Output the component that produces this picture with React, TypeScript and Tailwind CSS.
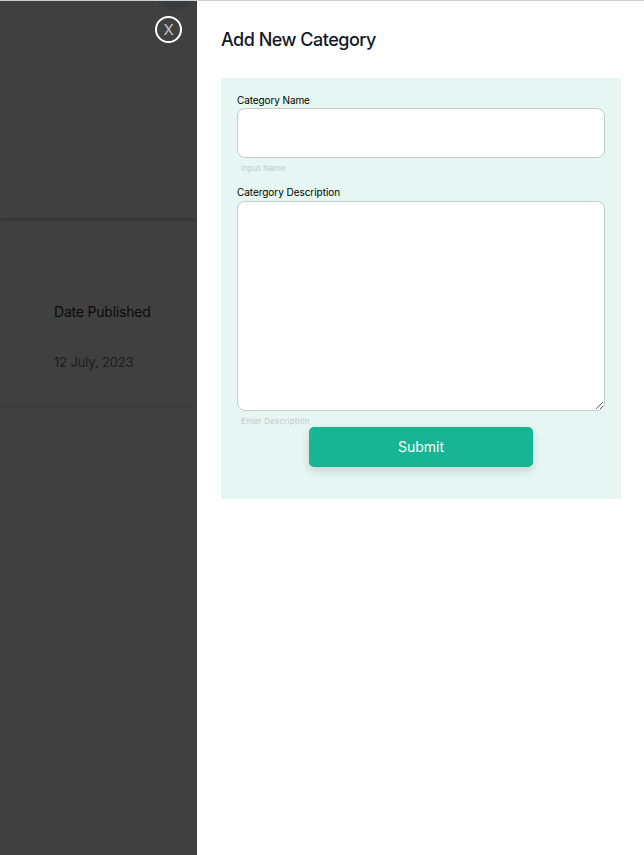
const App = () => {
    return (
        <div className="font-['Inter',sans-serif] h-[855px] w-full overflow-hidden flex flex-col bg-white">
            <div className="h-px bg-[#cfcfcf]" />
            <div className="flex flex-1 min-h-0">
                <div className="relative overflow-hidden w-[197px] bg-[#404040] flex flex-col">
                    <div className="h-[112px] shadow-[0_1px_2px_rgba(0,0,0,0.04)]" />
                    <div className="h-[105px] shadow-[0_2px_3px_rgba(0,0,0,0.18)]" />
                    <div className="h-[187px] pl-[54px] pt-[85px] shadow-[0_1px_3px_rgba(0,0,0,0.1)] text-[#0b0b0b]">
                        <p className="text-sm leading-[17px] tracking-[-0.2px]">Date Published</p>
                        <p className="text-[13px] leading-4 mt-[34px] tracking-[-0.15px] text-[#1c1c1c]">12 July, 2023</p>
                    </div>
                    <div className="absolute -top-[35px] left-[153px] w-11 h-11 rounded-full bg-[#3a3b3e]" />
                    <button className="absolute top-[15px] left-[155px] w-[27px] h-[27px] rounded-full border-2 border-white flex items-center justify-center text-[#c4c4c8] text-[15px] leading-none">
                        X
                    </button>
                </div>

                <div className="flex-1 pl-6 pr-[23px] pt-7">
                    <h1 className="text-lg leading-[22px] font-medium text-[#111827] tracking-[-0.5px]">Add New Category</h1>

                    <div className="mt-[27px] h-[421px] bg-[#e6f6f2] px-4 pt-4">
                        <label className="block text-[10px] leading-3 text-black tracking-[-0.1px]">Category Name</label>
                        <input className="block mt-[2px] w-full h-[50px] bg-white rounded-lg border border-[#c6cacc] outline-none" />
                        <p className="mt-[5px] ml-1 text-[8px] leading-[10px] text-[#c4c9cc] tracking-[0.1px]">Input Name</p>

                        <label className="block mt-[13px] text-[10px] leading-3 text-black tracking-[-0.05px]">Catergory Description</label>
                        <textarea className="block mt-[3px] w-full h-[210px] bg-white rounded-lg border border-[#c6cacc] outline-none resize-y" />
                        <p className="mt-[5px] ml-1 text-[8px] leading-[10px] text-[#c4c9cc] tracking-[0.2px]">Enter Description</p>

                        <button className="block mx-auto mt-px w-[224px] h-10 rounded-[5px] bg-[#18b595] text-white text-sm shadow-[0_4px_10px_rgba(0,0,0,0.14)]">
                            Submit
                        </button>
                    </div>
                </div>
            </div>
        </div>
    )
}

export default App
